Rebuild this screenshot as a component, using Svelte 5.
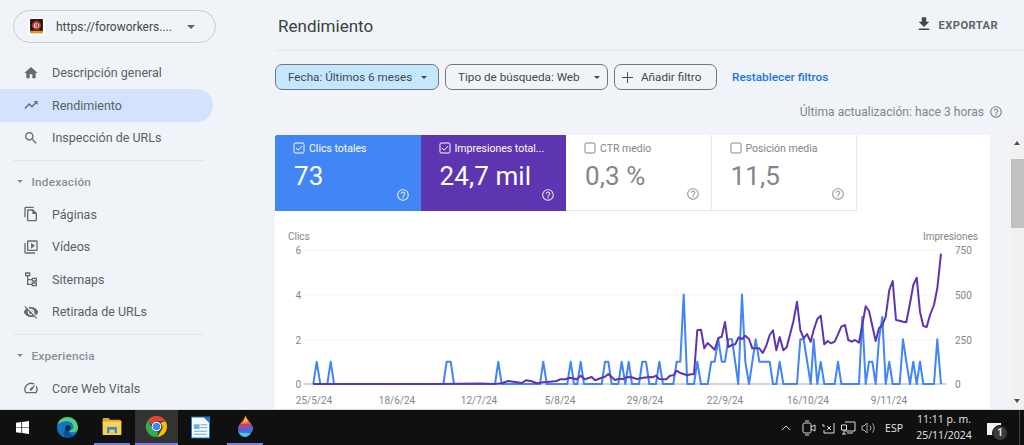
<script>
  const helpPath = 'M11 18h2v-2h-2v2zm1-16C6.48 2 2 6.48 2 12s4.48 10 10 10 10-4.48 10-10S17.52 2 12 2zm0 18c-4.41 0-8-3.59-8-8s3.59-8 8-8 8 3.59 8 8-3.59 8-8 8zm0-14c-2.21 0-4 1.79-4 4h2c0-1.1.9-2 2-2s2 .9 2 2c0 2-3 1.75-3 5h2c0-2.25 3-2.5 3-5 0-2.21-1.79-4-4-4z'

  const icons = {
    home: 'M10 20v-6h4v6h5v-8h3L12 3 2 12h3v8z',
    trend: 'M16 6l2.29 2.29-4.88 4.88-4-4L2 16.59 3.41 18l6-6 4 4 6.3-6.29L22 12V6z',
    search: 'M15.5 14h-.79l-.28-.27C15.41 12.59 16 11.11 16 9.5 16 5.91 13.09 3 9.5 3S3 5.91 3 9.5 5.91 16 9.5 16c1.61 0 3.09-.59 4.23-1.57l.27.28v.79l5 4.99L20.49 19l-4.99-5zm-6 0C7.01 14 5 11.99 5 9.5S7.01 5 9.5 5 14 7.01 14 9.5 11.99 14 9.5 14z',
    pages: 'M16 1H4c-1.1 0-2 .9-2 2v14h2V3h12V1zM15 5H8c-1.1 0-1.99.9-1.99 2L6 21c0 1.1.89 2 1.99 2H19c1.1 0 2-.9 2-2V11l-6-6zM8 21V7h6v5h5v9H8z',
    video: 'M4 6H2v14c0 1.1.9 2 2 2h14v-2H4V6zm16-4H8c-1.1 0-2 .9-2 2v12c0 1.1.9 2 2 2h12c1.1 0 2-.9 2-2V4c0-1.1-.9-2-2-2zm0 14H8V4h12v12zM12 5.5v9l6-4.5z',
    sitemap: 'M3 2h8v6H8v4h5v-2h8v6h-8v-2H8v5h5v-2h8v6h-8v-2H6V8H3V2zm2 2v2h4V4H5zm10 8v2h4v-2h-4zm0 7v2h4v-2h-4z',
    hidden: 'M12 7c2.76 0 5 2.24 5 5 0 .65-.13 1.26-.36 1.83l2.92 2.92c1.51-1.26 2.7-2.89 3.43-4.75-1.73-4.39-6-7.5-11-7.5-1.4 0-2.74.25-3.98.7l2.16 2.16C10.74 7.13 11.35 7 12 7zM2 4.27l2.28 2.28.46.46C3.08 8.3 1.78 10.02 1 12c1.73 4.39 6 7.5 11 7.5 1.55 0 3.03-.3 4.38-.84l.42.42L19.73 22 21 20.73 3.27 3 2 4.27zM7.53 9.8l1.55 1.55c-.05.21-.08.43-.08.65 0 1.66 1.34 3 3 3 .22 0 .44-.03.65-.08l1.55 1.55c-.67.33-1.41.53-2.2.53-2.76 0-5-2.24-5-5 0-.79.2-1.53.53-2.2zm4.31-.78l3.15 3.15.02-.16c0-1.66-1.34-3-3-3l-.17.01z',
    gauge: 'M20.38 8.57l-1.23 1.85a8 8 0 0 1-.22 7.58H5.07A8 8 0 0 1 15.58 6.85l1.85-1.23A10 10 0 0 0 3.35 19a2 2 0 0 0 1.72 1h13.85a2 2 0 0 0 1.74-1 10 10 0 0 0-.27-10.44zm-9.79 6.84a2 2 0 0 0 2.83 0l5.66-8.49-8.49 5.66a2 2 0 0 0 0 2.83z'
  }

  const navTop = [
    { label: 'Descripción general', icon: 'home' },
    { label: 'Rendimiento', icon: 'trend', active: true },
    { label: 'Inspección de URLs', icon: 'search' }
  ]
  const navIndex = [
    { label: 'Páginas', icon: 'pages' },
    { label: 'Vídeos', icon: 'video' },
    { label: 'Sitemaps', icon: 'sitemap' },
    { label: 'Retirada de URLs', icon: 'hidden' }
  ]

  const metrics = [
    { label: 'Clics totales', value: '73', kind: 'blue', on: true },
    { label: 'Impresiones total...', value: '24,7 mil', kind: 'purple', on: true },
    { label: 'CTR medio', value: '0,3 %' },
    { label: 'Posición media', value: '11,5' }
  ]

  // chart svg starts at page x=275, y=211
  const zeroY = 173
  const clickStep = 22.35
  const gridRows = [
    { y: 39, left: '6', right: '750' },
    { y: 84, left: '4', right: '500' },
    { y: 129, left: '2', right: '250' },
    { y: zeroY, left: '0', right: '0' }
  ]
  const dates = [
    [39, '25/5/24'], [122, '18/6/24'], [204, '12/7/24'], [285, '5/8/24'],
    [370, '29/8/24'], [450, '22/9/24'], [533, '16/10/24'], [614, '9/11/24']
  ]

  // clicks per day: [page x, clicks]
  const clicks = [
    [313.3,0],[316.7,1],[320.3,0],[327.3,0],[330.7,1],[334,0],[443.3,0],[446.7,1],[450.7,1],[454,0],
    [495,0],[498.3,1],[501.7,0],[540,0],[543.3,1],[546.7,0],[567.3,0],[570.7,1],[574,0],[577.3,0],
    [580.7,1],[584,0],[601.7,0],[605,1],[608.3,1],[611.7,0],[618.3,0],[621.7,1],[625.3,0],[628.7,1],
    [632,0],[639,0],[642.3,1],[646,1],[649.3,0],[656,0],[659.3,1],[663,0],[673.3,0],[676.7,1],
    [680.3,1],[683.7,4],[687.3,0],[694,0],[697.3,1],[701,0],[707.7,0],[711.3,1],[714.7,1],[718.3,2],
    [721.7,1],[725,1],[728.3,2],[732,2],[738.3,0],[742,4],[745.3,1],[749,0],[755.7,2],[759.3,1],
    [769.7,1],[773,0],[776.3,0],[779.7,1],[783.3,0],[797,0],[800.3,2],[803.7,2],[810.7,0],[813.7,2],
    [817.3,0],[820.7,1],[824.3,0],[834.7,0],[838,1],[841.3,0],[859,0],[862.3,3],[865.7,0],[869,1],
    [872.3,1],[875.7,0],[879,2],[882.3,3],[885.7,0],[889.3,1],[892.7,0],[899.7,0],[903,2],[906.3,1],
    [910,0],[913.3,1],[916.7,0],[920,1],[923.3,0],[934,0],[937.3,2],[941,0]
  ]

  // impressions traced per day: [page x, page y]
  const impressions = [
    [313,384],[380,384],[410,384],[440,384],[460,383.7],[480,383.5],[495,384],[501.7,383.3],[508.3,381],
    [515,382],[521.7,383],[526,380.3],[531.7,381.3],[536.7,383.3],[543.3,382.3],[550,381.7],[556.7,381],
    [560,379.3],[565,379.3],[570,377.7],[576.7,379.3],[580.7,375.7],[585,379.3],[591.7,377],[595,380.3],
    [601.7,377.7],[605,376.7],[608.3,374],[615,380],[618.3,379],[623.3,379],[626.7,377],[631.7,377.3],
    [636.7,379],[643.3,377.7],[650,377],[652.7,377.3],[656,375.7],[659.3,379],[666.3,379.3],[670,375.7],
    [673.3,375.3],[676.7,370.7],[680.3,373],[687.3,375.3],[690.7,374.3],[694,374.3],[697.3,330.3],[701,329.7],
    [704.3,348.3],[707.7,343],[714.7,349.7],[718.3,338],[721.7,336.7],[725,322],[728.3,347],[732,345],
    [735.3,344.3],[738.7,337.3],[742,339],[745.3,335.7],[749,339],[752.3,348.3],[759.3,348.3],[762.7,353],
    [766.3,345.7],[769.7,335],[773,330.3],[776.3,350.3],[779.7,337],[783.3,350.3],[786.7,347.3],[793.3,321.7],
    [797,301.7],[800.3,330],[803.7,338.3],[807,334],[810.7,341.7],[813.7,330],[817.3,319],[820.7,315.7],
    [824.3,344.3],[827.7,341],[831,343.3],[834.7,341.7],[838,334.3],[841.3,326.7],[845,325],[848.3,340],
    [851.7,341.7],[855,340],[859,342.7],[862.3,325],[865.7,306.3],[869,311],[875.7,341],[879,328.3],
    [882.3,325],[885.7,316.7],[889.3,290],[892.7,281],[896,320],[899.7,320.7],[903,321.7],[906.3,322.3],
    [910,303.3],[913.3,285],[916.7,277.7],[920,311.7],[923.3,326],[926.7,327],[930,315],[934,305],
    [937.3,288.3],[941,253.7]
  ]

  const toLine = (pts) => pts.map(([x, y]) => `${x - 275},${y - 211}`).join(' ')
  const clickLine = toLine(clicks.map(([x, v]) => [x, 211 + zeroY - v * clickStep]))
  const impressionLine = toLine(impressions)
</script>

{#snippet glyph(d, cls)}
  <svg class={cls} viewBox="0 0 24 24" aria-hidden="true"><path {d} /></svg>
{/snippet}

{#snippet navItem(item)}
  <a class="nav-item" class:active={item.active} href="#top">
    {@render glyph(icons[item.icon], 'nav-icon')}
    <span>{item.label}</span>
  </a>
{/snippet}

<div class="page">
  <div class="app">
    <aside class="sidebar">
      <button class="property">
        <svg class="favicon" viewBox="0 0 16 16" aria-hidden="true">
          <rect width="16" height="16" fill="#fff" />
          <rect x="2" y="1" width="12" height="12" fill="#1c1410" />
          <rect x="2" y="12" width="12" height="2.5" fill="#d99a2b" />
          <circle cx="8" cy="7" r="4.4" fill="#c8281e" />
          <circle cx="8" cy="7" r="2.6" fill="#f3ece6" />
          <rect x="7" y="5" width="1" height="4" fill="#6a2a20" />
          <rect x="8.6" y="5" width="1" height="4" fill="#6a2a20" />
        </svg>
        <span class="property-name">https://foroworkers....</span>
        <span class="caret"></span>
      </button>

      <nav class="nav">
        {#each navTop as item}
          {@render navItem(item)}
        {/each}
        <hr />
        <div class="section"><span class="caret small"></span>Indexación</div>
        {#each navIndex as item}
          {@render navItem(item)}
        {/each}
        <hr />
        <div class="section"><span class="caret small"></span>Experiencia</div>
        {@render navItem({ label: 'Core Web Vitals', icon: 'gauge' })}
      </nav>
    </aside>

    <main class="main">
      <header class="header">
        <h1>Rendimiento</h1>
        <button class="export">
          <svg viewBox="0 0 24 24" aria-hidden="true"><path d="M19 9h-4V3H9v6H5l7 7 7-7zM5 18v2h14v-2H5z" /></svg>
          EXPORTAR
        </button>
      </header>

      <div class="filters">
        <button class="chip date">Fecha: Últimos 6 meses<span class="caret small dark"></span></button>
        <button class="chip type">Tipo de búsqueda: Web<span class="caret small dark"></span></button>
        <button class="chip add">
          <svg viewBox="0 0 12 12" aria-hidden="true"><path d="M5.5 0h1v5.5H12v1H6.5V12h-1V6.5H0v-1h5.5z" /></svg>
          Añadir filtro
        </button>
        <a class="reset" href="#top">Restablecer filtros</a>
      </div>

      <div class="updated">
        Última actualización: hace 3 horas
        {@render glyph(helpPath, 'help')}
      </div>

      <div class="scroller">
        <section class="panel">
          <div class="cards">
            {#each metrics as m}
              <div class="card {m.kind ?? ''}">
                <div class="card-label">
                  <svg class="check" viewBox="0 0 12 12" aria-hidden="true">
                    <rect x="1" y="1" width="10" height="10" rx="1.2" />
                    {#if m.on}<path d="M3 6l2.2 2.2L9.2 4" />{/if}
                  </svg>
                  {m.label}
                </div>
                <div class="card-value">{m.value}</div>
                {@render glyph(helpPath, 'card-help')}
              </div>
            {/each}
          </div>

          <svg class="chart" viewBox="0 0 715 198" width="715" height="198">
            <text class="axis" x="13" y="29">Clics</text>
            <text class="axis" x="703" y="29" text-anchor="end">Impresiones</text>
            {#each gridRows as row}
              <line class="grid" class:zero={row.y === zeroY} x1="29" x2="671" y1={row.y} y2={row.y} />
              <text class="axis" x="26" y={row.y + 4} text-anchor="end">{row.left}</text>
              <text class="axis" x="680" y={row.y + 4}>{row.right}</text>
            {/each}
            {#each dates as [x, label]}
              <text class="axis" {x} y="193" text-anchor="middle">{label}</text>
            {/each}
            <polyline class="line clicks" points={clickLine} />
            <polyline class="line impressions" points={impressionLine} />
          </svg>
        </section>

        <div class="scrollbar">
          <span class="arrow up"></span>
          <span class="thumb"></span>
          <span class="arrow down"></span>
        </div>
      </div>
    </main>
  </div>

  <footer class="taskbar">
    <div class="apps">
      <span class="task start">
        <svg width="13" height="13" viewBox="0 0 14 14" aria-hidden="true">
          <path fill="#fff" d="M0 2l5.8-.8v5.4H0zM6.6 1.1L14 0v6.6H6.6zM0 7.4h5.8v5.4L0 12zM6.6 7.4H14V14l-7.4-1.1z" />
        </svg>
      </span>
      <span class="task edge">
        <svg width="23" height="23" viewBox="0 0 24 24" aria-hidden="true">
          <circle cx="12" cy="12" r="11" fill="#1273c4" />
          <path fill="#4fd07a" d="M12 1a11 11 0 0 1 11 11c0 3-2 5-5 5-2 0-4-.8-4.500-2 3 0 4.500-1.500 4.500-3.500C18 8 15.500 5.500 11 5.500 6 5.500 2.500 8 1.200 10 2 5 6.500 1 12 1z" />
          <path fill="#0c4f96" d="M13.500 15c-.8 2 1 5 4.500 5.300A11 11 0 0 1 12 23C8 23 7 18 9 15c1-1.600 3-2 4.500 0z" />
          <circle cx="12.500" cy="12.500" r="2.800" fill="#111" opacity=".75" />
        </svg>
      </span>
      <span class="task running">
        <svg width="20" height="17" viewBox="0 0 21 19" aria-hidden="true">
          <path fill="#d9a63a" d="M0 1.500A1.500 1.500 0 0 1 1.500 0h5l2 2H19a2 2 0 0 1 2 2v2H0z" />
          <rect y="4" width="21" height="15" rx="1" fill="#fcd052" />
          <rect x="5" y="10" width="11" height="7" fill="#2b8fd8" />
          <rect x="7.500" y="13" width="6" height="4" fill="#fcd052" />
        </svg>
      </span>
      <span class="task running current">
        <svg width="23" height="23" viewBox="0 0 24 24" aria-hidden="true">
          <path fill="#ea4335" d="M12 1a11 11 0 0 1 9.500 5.500H12A5.500 5.500 0 0 0 6.800 10.300L3.200 5.300A11 11 0 0 1 12 1z" />
          <path fill="#fbbc05" d="M21.500 6.500A11 11 0 0 1 12.800 23l4-6.700A5.500 5.500 0 0 0 16 8.200z" />
          <path fill="#34a853" d="M12.800 23A11 11 0 0 1 3.200 5.300l4.500 8.800a5.500 5.500 0 0 0 6 3.200z" />
          <circle cx="12" cy="12" r="5" fill="#fff" />
          <circle cx="12" cy="12" r="4" fill="#4285f4" />
        </svg>
      </span>
      <span class="task writer">
        <svg width="19" height="23" viewBox="0 0 20 23" aria-hidden="true">
          <path fill="#f4f8fd" stroke="#1d7cc4" d="M.5.500h13l6 6v16H.500z" />
          <path fill="#1d7cc4" d="M13 0h7v7z" />
          <path fill="#6aaede" d="M3 8h6v5H3zM10 8h7v1h-7zM10 11h7v1h-7zM3 15h14v1H3zM3 18h14v1H3z" />
        </svg>
      </span>
      <span class="task running drop">
        <svg width="17" height="24" viewBox="0 0 18 25" aria-hidden="true">
          <path fill="#e8683c" d="M9 0c1 4 4 6 6.500 10H2.500C5 7 8 4 9 0z" />
          <path fill="#f2b531" d="M9 0c.5 3 2 5 3 7-2 0-4 1-6 2 1-3 3-6 3-9z" />
          <path fill="#b63fb0" d="M2.500 10h13c1 1.500 1.500 3 1.500 4l-16 1c0-2 .5-3.500 1.500-5z" />
          <path fill="#3f6fd8" d="M1 15l16-2.500c.5 2-.5 4.500-2 6l-13.500-.5C1 17 1 16 1 15z" />
          <path fill="#4cc2e8" d="M1.500 18l13.500.5A8.500 8.500 0 0 1 9 23 8 8 0 0 1 1.500 18z" />
        </svg>
      </span>
    </div>

    <div class="tray">
      <svg class="tray-icon chevron" width="10" height="7" viewBox="0 0 10 7" aria-hidden="true"><path d="M1 6l4-4 4 4" /></svg>
      <svg class="tray-icon" width="14" height="16" viewBox="0 0 14 16" aria-hidden="true">
        <rect x="1" y="3" width="8" height="10" rx="1.500" /><path d="M9 7l4-2v6l-4-2M3 1h4M3 15h4" />
      </svg>
      <svg class="tray-icon" width="15" height="12" viewBox="0 0 15 12" aria-hidden="true">
        <path d="M1 3h2v2M13 1v10H3V8M6 4l4 4M10 4l-4 4" />
      </svg>
      <svg class="tray-icon" width="15" height="14" viewBox="0 0 15 14" aria-hidden="true">
        <path d="M4 1h10v9H4M0.500 4h5v5h-5zM3 9v4M1 13h4M6 12h6" />
      </svg>
      <svg class="tray-icon dim" width="15" height="14" viewBox="0 0 15 14" aria-hidden="true">
        <path d="M1 5h2l3-3v10L3 9H1zM9 4.500a4 4 0 0 1 0 5M11.500 2.500a7 7 0 0 1 0 9" />
      </svg>
      <span class="lang">ESP</span>
      <div class="clock"><span>11:11 p. m.</span><span>25/11/2024</span></div>
      <div class="notify">
        <svg width="14" height="12" viewBox="0 0 14 12" aria-hidden="true"><path fill="#f2f2f2" d="M0 0h14v12H0z" /></svg>
        <span class="badge">1</span>
      </div>
    </div>
  </footer>
</div>

<style>
  :global(body) {
    margin: 0;
    background: #f0f4f9;
    font-family: Roboto, "Liberation Sans", sans-serif;
    color: #444746;
  }

  .page {
    display: flex;
    flex-direction: column;
    height: 445px;
    overflow: hidden;
  }

  .app {
    display: flex;
    height: 409px;
    flex: none;
    overflow: hidden;
  }

  button {
    font: inherit;
    color: inherit;
    background: none;
    cursor: pointer;
  }

  /* sidebar */
  .sidebar {
    width: 275px;
    flex: none;
  }

  .property {
    display: flex;
    align-items: center;
    width: 203px;
    height: 33px;
    margin: 10px 0 0 13px;
    padding: 0 0 0 14px;
    border: 1px solid #c9cdd0;
    border-radius: 17px;
    font-size: 12px;
  }

  .favicon {
    width: 17px;
    height: 17px;
    flex: none;
    margin-right: 11px;
  }

  .property-name {
    width: 131px;
    text-align: left;
    white-space: nowrap;
  }

  .caret {
    width: 0;
    height: 0;
    border-left: 4px solid transparent;
    border-right: 4px solid transparent;
    border-top: 4px solid #5f6368;
    flex: none;
  }

  .caret.small {
    border-width: 3px 3.5px 0;
    border-top-color: #8a8f94;
  }

  .caret.small.dark {
    border-top-color: #444746;
    border-width: 3px 3.5px 0;
  }

  .nav {
    display: flex;
    flex-direction: column;
    width: 213px;
    margin-top: 13.5px;
  }

  .nav-item {
    display: flex;
    align-items: center;
    gap: 13px;
    height: 32.5px;
    flex: none;
    padding-left: 23px;
    border-radius: 0 17px 17px 0;
    color: #5b5f62;
    font-size: 12.5px;
    text-decoration: none;
    white-space: nowrap;
  }

  .nav-item.active {
    background: #d3e3fd;
  }

  .nav-icon {
    width: 16px;
    height: 16px;
    flex: none;
    fill: #66696d;
  }

  hr {
    width: 191px;
    flex: none;
    margin: 6px 0 4.5px 13px;
    border: 0;
    border-top: 1px solid #e3e6ea;
  }

  .section {
    display: flex;
    align-items: center;
    gap: 8.5px;
    height: 32.5px;
    flex: none;
    padding-left: 17px;
    color: #8a8f94;
    font-size: 11.8px;
    font-weight: 500;
    letter-spacing: 0.2px;
  }

  /* main column */
  .main {
    flex: 1;
    min-width: 0;
    display: flex;
    flex-direction: column;
  }

  .header {
    display: flex;
    align-items: center;
    justify-content: space-between;
    height: 50px;
    flex: none;
    padding: 0 26px 0 3px;
    border-bottom: 1px solid #e3e6ea;
  }

  h1 {
    margin: 2px 0 0;
    font-size: 17px;
    font-weight: 400;
    color: #3c4043;
  }

  .export {
    display: flex;
    align-items: center;
    gap: 6px;
    padding: 0;
    border: 0;
    font-size: 11.2px;
    font-weight: 700;
    letter-spacing: 0.4px;
    color: #5f6368;
  }

  .export svg {
    width: 18px;
    height: 18px;
    margin-top: -3px;
    fill: #444746;
  }

  .filters {
    display: flex;
    align-items: center;
    gap: 6px;
    height: 26px;
    flex: none;
    margin-top: 13px;
  }

  .chip {
    display: flex;
    align-items: center;
    height: 26px;
    box-sizing: border-box;
    padding: 0;
    border: 1px solid #747775;
    border-radius: 7px;
    font-size: 11.7px;
    white-space: nowrap;
  }

  .chip.date {
    justify-content: space-between;
    width: 164px;
    padding: 0 11px 0 12px;
    background: #c2e7ff;
  }

  .chip.type {
    justify-content: space-between;
    width: 163px;
    padding: 0 7px 0 12px;
  }

  .chip.add {
    width: 103px;
    padding-left: 7px;
    gap: 8px;
  }

  .chip.add svg {
    width: 11px;
    height: 11px;
    fill: #444746;
  }

  .reset {
    margin-left: 9px;
    color: #1a73e8;
    font-size: 11.8px;
    font-weight: 500;
    text-decoration: none;
  }

  .updated {
    display: flex;
    align-items: center;
    justify-content: flex-end;
    gap: 5px;
    height: 16px;
    flex: none;
    margin-top: 14px;
    padding-right: 21px;
    color: #80868b;
    font-size: 12.1px;
  }

  .help {
    width: 14px;
    height: 14px;
    fill: #80868b;
  }

  .scroller {
    display: flex;
    gap: 21px;
    flex: 1;
    min-height: 0;
    margin-top: 15px;
  }

  .panel {
    width: 715px;
    flex: none;
    overflow: hidden;
    border-radius: 2px 2px 0 0;
    background: #fff;
  }

  .cards {
    display: flex;
    height: 76px;
  }

  .card {
    position: relative;
    box-sizing: border-box;
    width: 145.500px;
    padding: 6px 0 0 18px;
    color: #80868b;
    border-right: 1px solid #e3e5e8;
    border-bottom: 1px solid #e3e5e8;
  }

  .card.blue,
  .card.purple {
    border: 0;
    color: #fff;
  }

  .card.blue {
    background: #4285f4;
  }

  .card.purple {
    background: #5e35b1;
  }

  .card-label {
    display: flex;
    align-items: center;
    gap: 4px;
    height: 14px;
    font-size: 10.5px;
    white-space: nowrap;
  }

  .check {
    width: 12px;
    height: 12px;
    flex: none;
    fill: none;
    stroke: currentColor;
    stroke-width: 1;
  }

  .card-value {
    margin: 4px 0 0 1px;
    font-size: 26px;
    line-height: 34px;
    letter-spacing: 0.1px;
  }

  .card-help {
    position: absolute;
    right: 11px;
    bottom: 9px;
    width: 14px;
    height: 14px;
    fill: currentColor;
    opacity: 0.8;
  }

  .chart {
    display: block;
  }

  .axis {
    font-size: 10px;
    fill: #80868b;
  }

  .grid {
    stroke: #f1f3f4;
    stroke-width: 1;
  }

  .grid.zero {
    stroke: #a8acb0;
  }

  .line {
    fill: none;
    stroke-width: 2;
    stroke-linejoin: round;
  }

  .clicks {
    stroke: #4285f4;
  }

  .impressions {
    stroke: #5e35b1;
  }

  .scrollbar {
    position: relative;
    width: 13px;
    flex: none;
    background: #f1f1f1;
  }

  .thumb {
    position: absolute;
    top: 24px;
    left: 0;
    right: 0;
    height: 69px;
    background: #c1c1c1;
  }

  .arrow {
    position: absolute;
    left: 3px;
    width: 0;
    height: 0;
    border-left: 3.500px solid transparent;
    border-right: 3.500px solid transparent;
  }

  .arrow.up {
    top: 6px;
    border-bottom: 4px solid #505050;
  }

  .arrow.down {
    bottom: 6px;
    border-top: 4px solid #505050;
  }

  /* windows taskbar */
  .taskbar {
    display: flex;
    justify-content: space-between;
    height: 36px;
    flex: none;
    box-sizing: border-box;
    border-top: 1px solid #d9dbde;
    background: #101010;
    color: #e6e6e6;
  }

  .apps {
    display: flex;
  }

  .task {
    display: flex;
    align-items: center;
    justify-content: center;
    box-sizing: border-box;
    height: 35px;
    width: 43px;
  }

  .task.start {
    width: 45px;
  }

  .task.edge {
    width: 45px;
    margin-right: 4px;
  }

  .task.running {
    width: 36px;
    margin-right: 5px;
    border-bottom: 2px solid #7680e0;
  }

  .task.current {
    width: 43px;
    margin-right: 0;
    background: #333;
  }

  .task.writer {
    width: 44px;
    margin-right: 5px;
  }

  .tray {
    display: flex;
    align-items: center;
    height: 35px;
    padding-right: 4px;
  }

  .tray-icon {
    margin-right: 5px;
    fill: none;
    stroke: #dcdcdc;
    stroke-width: 1;
  }

  .tray-icon.chevron {
    margin-right: 11px;
  }

  .tray-icon.dim {
    stroke: #aaa;
  }

  .lang {
    margin-left: 4px;
    font-size: 10.5px;
    font-family: "Open Sans", sans-serif;
  }

  .clock {
    display: flex;
    flex-direction: column;
    align-items: center;
    gap: 2px;
    width: 60px;
    margin: -2px 0 0 11px;
    font-family: "Open Sans", sans-serif;
    font-size: 10.5px;
    line-height: 14px;
  }

  .notify {
    position: relative;
    width: 33px;
    height: 35px;
    margin-left: 13px;
    box-sizing: border-box;
    padding-top: 10px;
    border-right: 1px solid #444;
  }

  .badge {
    position: absolute;
    top: 15px;
    left: 5px;
    box-sizing: border-box;
    width: 16px;
    height: 16px;
    border: 1px solid #101010;
    border-radius: 50%;
    background: #3a3a3a;
    font-size: 10px;
    line-height: 14px;
    text-align: center;
    font-weight: 700;
  }
</style>
